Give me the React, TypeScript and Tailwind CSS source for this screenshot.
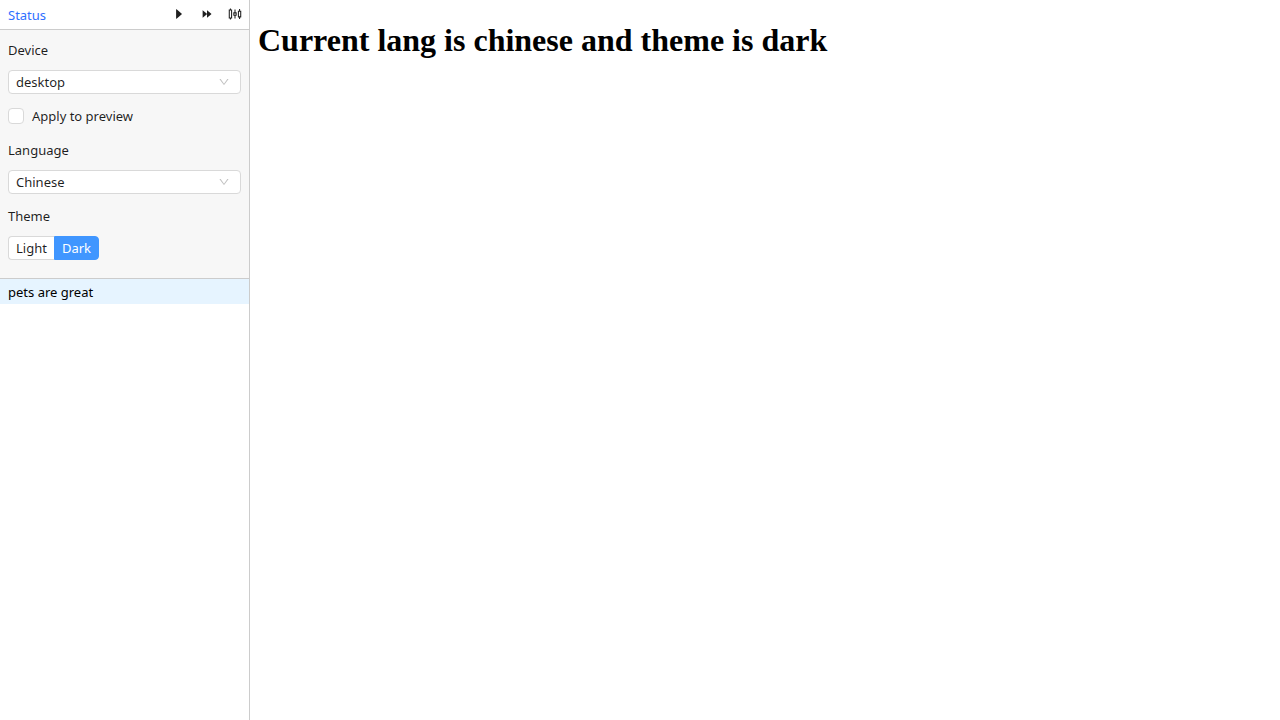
import { useState } from "react";
import type { ReactNode } from "react";
import { AiOutlineCaretRight, AiOutlineDown, AiOutlineForward, AiOutlineSliders } from "react-icons/ai";

function IconButton({ label, children }: { label: string; children: ReactNode }) {
  return (
    <button type="button" aria-label={label} className="flex size-7 items-center justify-center text-sm text-black/88">
      {children}
    </button>
  );
}

type SelectFieldProps = {
  id: string;
  label: string;
  value: string;
  options: string[];
  onChange: (value: string) => void;
};

function SelectField({ id, label, value, options, onChange }: SelectFieldProps) {
  return (
    <div className="flex flex-col gap-2">
      <label htmlFor={id} className="leading-6">
        {label}
      </label>
      <div className="grid items-center">
        <select
          id={id}
          value={value}
          onChange={(event) => onChange(event.target.value)}
          className="col-start-1 row-start-1 h-6 w-full appearance-none rounded border border-[#d9d9d9] bg-white pt-px pl-[7px] pr-7"
        >
          {options.map((option) => (
            <option key={option}>{option}</option>
          ))}
        </select>
        <AiOutlineDown className="pointer-events-none col-start-1 row-start-1 mr-[11px] size-3 justify-self-end text-black/25" />
      </div>
    </div>
  );
}

export default function App() {
  const [device, setDevice] = useState("desktop");
  const [language, setLanguage] = useState("Chinese");
  const [theme, setTheme] = useState("Dark");

  return (
    <div className="flex min-h-screen bg-white">
      <aside className="flex w-[250px] shrink-0 flex-col border-r border-[#ccc] font-['Noto_Sans',sans-serif] text-[13px] text-black/88">
        <header className="flex h-[30px] items-start justify-between border-b border-[#ccc] pl-2">
          <a href="#status" className="leading-[30px] text-[#2f70ff]">
            Status
          </a>
          <div className="flex">
            <IconButton label="Run">
              <AiOutlineCaretRight />
            </IconButton>
            <IconButton label="Run all">
              <AiOutlineForward />
            </IconButton>
            <IconButton label="Settings">
              <AiOutlineSliders className="size-4" />
            </IconButton>
          </div>
        </header>

        <form className="flex flex-col gap-[10px] border-b border-[#ccc] bg-[#f7f7f7] px-2 pt-2 pb-[18px]">
          <SelectField id="device" label="Device" value={device} options={["desktop", "mobile"]} onChange={setDevice} />
          <label className="flex items-center gap-2 leading-6">
            <input type="checkbox" className="size-4 appearance-none rounded border border-[#d9d9d9] bg-white checked:bg-[#4096ff]" />
            Apply to preview
          </label>
          <SelectField id="language" label="Language" value={language} options={["Chinese", "English"]} onChange={setLanguage} />
          <fieldset>
            <legend className="mb-2 leading-6">Theme</legend>
            <div className="flex">
              {["Light", "Dark"].map((name) => (
                <label
                  key={name}
                  className="flex h-6 items-center border border-[#d9d9d9] bg-white px-[7px] leading-6 first:rounded-l first:border-r-0 last:rounded-r has-checked:border-[#4096ff] has-checked:bg-[#4096ff] has-checked:text-white"
                >
                  <input
                    type="radio"
                    name="theme"
                    checked={theme === name}
                    onChange={() => setTheme(name)}
                    className="sr-only"
                  />
                  {name}
                </label>
              ))}
            </div>
          </fieldset>
        </form>

        <ul>
          <li className="h-[25px] bg-[#e6f4ff] px-2 leading-[26px] text-black">pets are great</li>
        </ul>
      </aside>

      <main className="flex-1 px-2 pt-[22px]">
        <h1 className="font-['Liberation_Serif',serif] text-[32px] leading-[37px] font-bold text-black">
          Current lang is {language.toLowerCase()} and theme is {theme.toLowerCase()}
        </h1>
      </main>
    </div>
  );
}
